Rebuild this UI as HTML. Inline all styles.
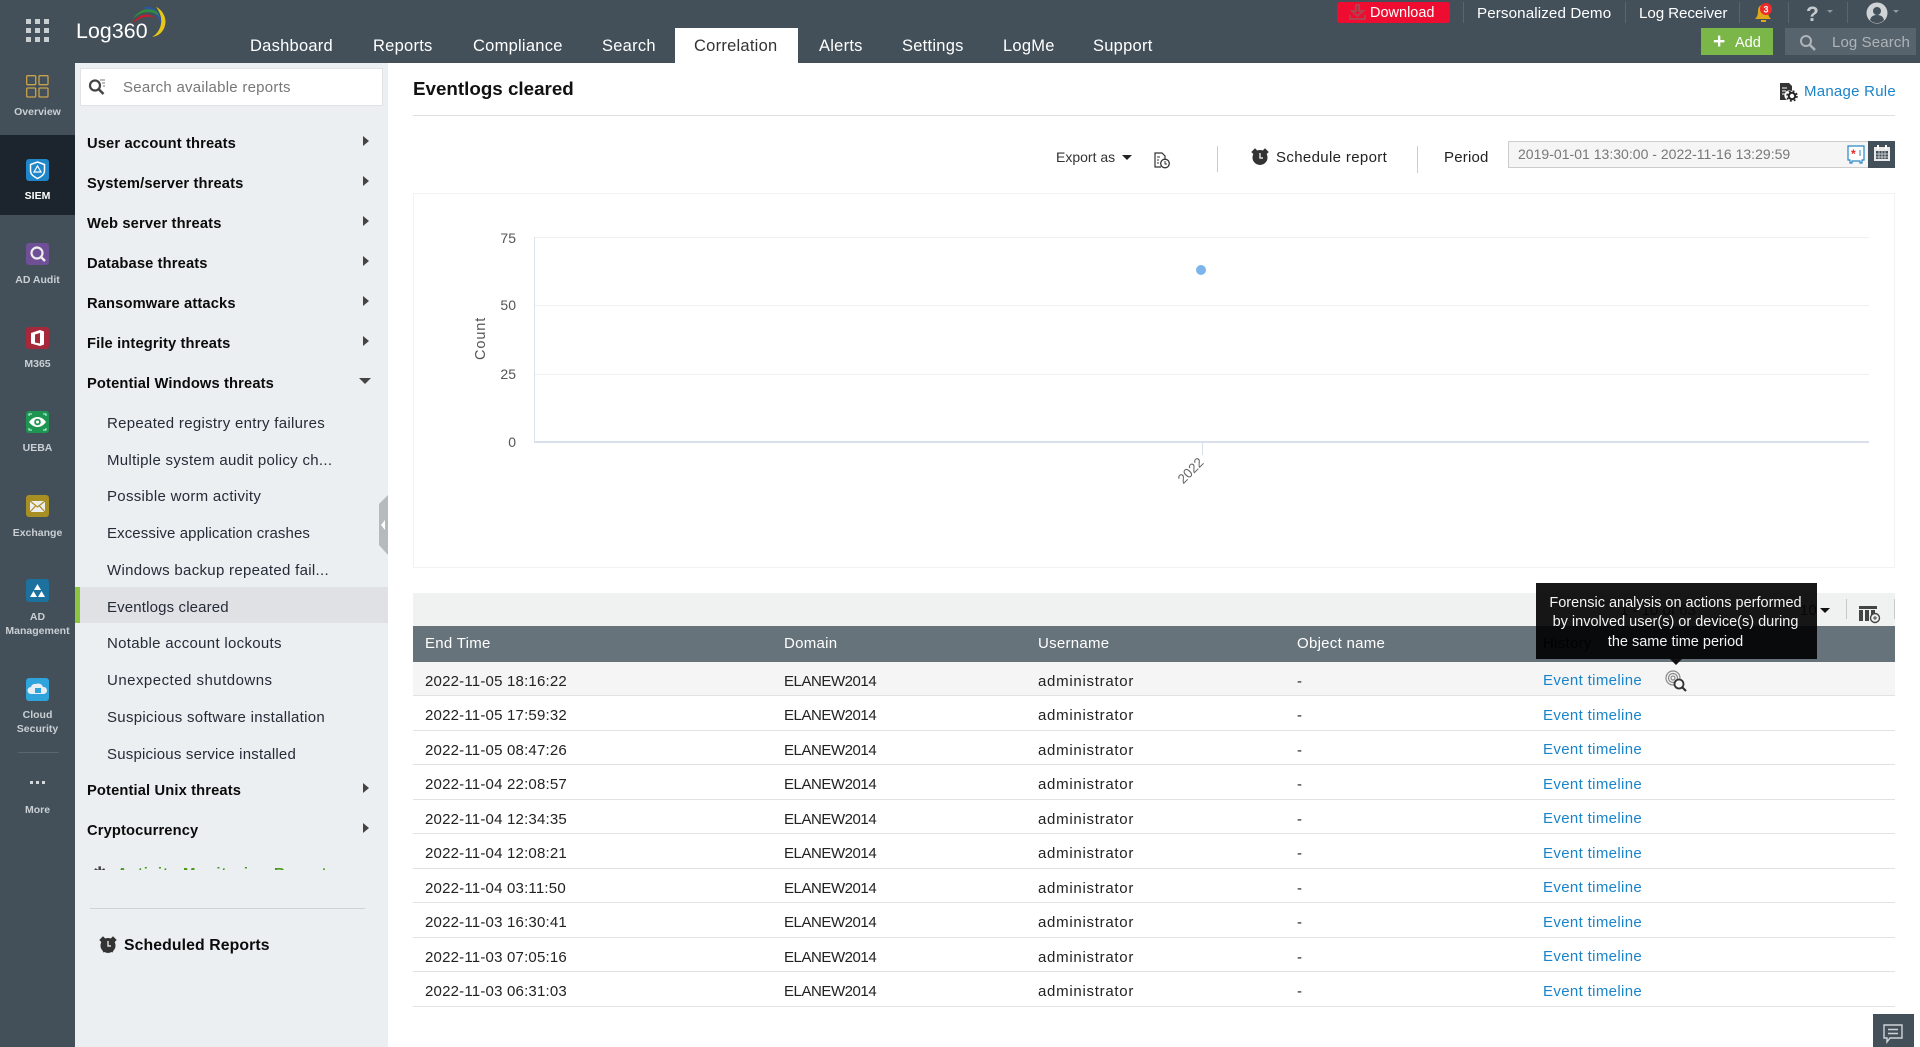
<!DOCTYPE html>
<html lang="en"><head><meta charset="utf-8"><title>Eventlogs cleared</title>
<style>
*{box-sizing:border-box}
html,body{margin:0;padding:0;width:1920px;height:1047px;overflow:hidden;background:#fff;font-family:"Liberation Sans",sans-serif;color:#222}
.b{position:absolute}
.t{position:absolute;white-space:nowrap;line-height:0;display:block;margin-top:1px}
svg{position:absolute;overflow:visible}
.nav{font-size:16.5px;color:#fff;top:45px;letter-spacing:.25px}
.top{font-size:15.2px;color:#fff;top:13px;letter-spacing:.1px}
.sl{font-size:10.5px;color:#c9cfd3;font-weight:bold;width:75px;left:0;text-align:center}
.h{font-size:14.7px;font-weight:bold;color:#0b0b0b;left:87px;letter-spacing:.14px}
.s{font-size:15px;color:#262b38;left:107px;letter-spacing:.3px}
.arr{position:absolute;left:363px;width:0;height:0;border-left:6px solid #444;border-top:5px solid transparent;border-bottom:5px solid transparent}
.th{font-size:15px;color:#fff;top:643px;letter-spacing:.28px}
.c{font-size:15px;color:#222;letter-spacing:.2px;margin-top:4px}
.d{letter-spacing:-.45px}
.u{letter-spacing:.72px}
.lnk{color:#1a84c9;font-size:15px;letter-spacing:.35px;margin-top:4px}
.ln{position:absolute;left:413px;width:1482px;height:1px;background:#e2e2e2}
.yl{font-size:14px;color:#555;text-align:right;width:40px;left:476px;margin-top:0}
.tip{font-size:14.5px;color:#f4f4f4;width:283px;left:1534px;text-align:center}
</style></head><body>

<!-- header -->
<div class="b" style="left:0;top:0;width:1920px;height:63px;background:#43505a"></div>
<svg style="left:0;top:0" width="200" height="63">
<g fill="#c9ced1">
<rect x="26" y="19" width="5" height="5"/><rect x="35" y="19" width="5" height="5"/><rect x="44" y="19" width="5" height="5"/>
<rect x="26" y="28" width="5" height="5"/><rect x="35" y="28" width="5" height="5"/><rect x="44" y="28" width="5" height="5"/>
<rect x="26" y="37" width="5" height="5"/><rect x="35" y="37" width="5" height="5"/><rect x="44" y="37" width="5" height="5"/>
</g>
<path d="M152 37C160 36 165 30 165.500 22 165.500 15 161 9 156 7 160 12 162 18 161 24 160 30 156 35 152 37Z" fill="#e8c516"/>
<path d="M143 8C149 5 156 8 160 15 161 18 161 21 161 24 159 16 152 10 143 8Z" fill="#2a55a4"/>
<path d="M133 19C138 10 147 7 156 11 158 13 158 14 159 16 151 10 141 11 133 19Z" fill="#2e8c3e"/>
<path d="M132 24C138 14 148 12 156 18 148 15 140 17 132 24Z" fill="#c41e2a"/>
</svg>
<span class="t" style="left:76px;top:30px;font-size:21.3px;color:#fff;letter-spacing:.1px">Log360</span>

<span class="t nav" style="left:250px">Dashboard</span>
<span class="t nav" style="left:373px">Reports</span>
<span class="t nav" style="left:473px">Compliance</span>
<span class="t nav" style="left:602px">Search</span>
<div class="b" style="left:675px;top:28px;width:123px;height:36px;background:#fff"></div>
<span class="t nav" style="left:694px;color:#333">Correlation</span>
<span class="t nav" style="left:819px">Alerts</span>
<span class="t nav" style="left:902px">Settings</span>
<span class="t nav" style="left:1003px">LogMe</span>
<span class="t nav" style="left:1093px">Support</span>

<div class="b" style="left:1337px;top:2px;width:113px;height:21px;background:#ee0d30;border-radius:3px"></div>
<svg style="left:1349px;top:5px" width="18" height="16"><path d="M7 0h3v6h4l-5.500 5L3 6h4zM1 10v4h15v-4" fill="none" stroke="#b3404f" stroke-width="2"/></svg>
<span class="t" style="left:1370px;top:12px;font-size:14.5px;color:#fff">Download</span>
<div class="b" style="left:1463px;top:2px;width:1px;height:21px;background:#5a666f"></div>
<span class="t top" style="left:1477px">Personalized Demo</span>
<div class="b" style="left:1625px;top:2px;width:1px;height:21px;background:#5a666f"></div>
<span class="t top" style="left:1639px;letter-spacing:-.1px">Log Receiver</span>
<div class="b" style="left:1739px;top:2px;width:1px;height:21px;background:#5a666f"></div>
<svg style="left:1753px;top:2px" width="22" height="20"><path d="M2 17c2-2 3-4 3-8s2-6 5-6 5 2 5 6 1 6 3 8zM8 18h5v2H8z" fill="#e0a915"/><circle cx="13" cy="7" r="6" fill="#ee2a2a"/><text x="13" y="10.500" font-size="9" font-weight="bold" fill="#fff" text-anchor="middle" font-family="Liberation Sans">3</text></svg>
<div class="b" style="left:1788px;top:2px;width:1px;height:21px;background:#5a666f"></div>
<span class="t" style="left:1806px;top:14px;font-size:21px;font-weight:bold;color:#c5cacd">?</span>
<div class="b" style="left:1827px;top:10px;border-top:3px solid #8d979d;border-left:3px solid transparent;border-right:3px solid transparent"></div>
<div class="b" style="left:1847px;top:2px;width:1px;height:21px;background:#5a666f"></div>
<svg style="left:1866px;top:2px" width="22" height="22"><circle cx="11" cy="11" r="10.500" fill="#cfd3d6"/><circle cx="11" cy="9" r="4" fill="#43505a"/><path d="M4 18c1-4 4-5 7-5s6 1 7 5c-2 2-4 3-7 3s-5-1-7-3z" fill="#43505a"/></svg>
<div class="b" style="left:1893px;top:10px;border-top:3px solid #8d979d;border-left:3px solid transparent;border-right:3px solid transparent"></div>

<div class="b" style="left:1701px;top:28px;width:72px;height:27px;background:#7ab648"></div>
<span class="t" style="left:1713px;top:41px;font-size:21px;font-weight:bold;color:#fff">+</span>
<span class="t" style="left:1735px;top:42px;font-size:14.5px;color:#fff">Add</span>
<div class="b" style="left:1785px;top:28px;width:131px;height:27px;background:#58646d"></div>
<svg style="left:1799px;top:34px" width="18" height="18"><circle cx="7" cy="7" r="5" fill="none" stroke="#aeb4b8" stroke-width="2"/><path d="M11 11l5 5" stroke="#aeb4b8" stroke-width="2.500"/></svg>
<span class="t" style="left:1832px;top:42px;font-size:15px;color:#aeb4b8;letter-spacing:.12px">Log Search</span>

<!-- left rail -->
<div class="b" style="left:0;top:63px;width:75px;height:984px;background:#43505a"></div>
<div class="b" style="left:0;top:135px;width:75px;height:80px;background:#1c252d"></div>
<svg style="left:26px;top:75px" width="23" height="23"><g fill="none" stroke="#c9a24a" stroke-width="1.300"><rect x=".7" y=".7" width="9" height="9" rx="1"/><rect x="13" y=".7" width="9" height="9" rx="1"/><rect x=".7" y="13" width="9" height="9" rx="1"/><rect x="13" y="13" width="9" height="9" rx="1"/></g></svg>
<span class="t sl" style="top:111px">Overview</span>
<svg style="left:26px;top:159px" width="23" height="22"><rect width="23" height="22" rx="3" fill="#1f86c9"/><path d="M11.500 3l7 2.500v6c0 4-3 6-7 8-4-2-7-4-7-8v-6z" fill="none" stroke="#fff" stroke-width="1.500"/><path d="M11.500 7l3.500 6H8z" fill="none" stroke="#fff" stroke-width="1.200"/></svg>
<span class="t sl" style="top:195px;color:#fff">SIEM</span>
<svg style="left:26px;top:243px" width="23" height="22"><rect width="23" height="22" rx="3" fill="#6f4f96"/><circle cx="11" cy="10" r="5.500" fill="#6f4f96" stroke="#eee" stroke-width="2.200"/><path d="M15 14l4 4" stroke="#eee" stroke-width="2.500"/></svg>
<span class="t sl" style="top:279px">AD Audit</span>
<svg style="left:26px;top:327px" width="23" height="22"><rect width="23" height="22" rx="3" fill="#a5293a"/><path d="M5 6l9-3 4 1.500v13L14 19l-9-2.500z" fill="#fff"/><path d="M9 7.500l5-1.500v10.500l-5-1z" fill="#a5293a"/></svg>
<span class="t sl" style="top:363px">M365</span>
<svg style="left:26px;top:411px" width="23" height="22"><rect width="23" height="22" rx="3" fill="#1d9651"/><path d="M3 11c3-4 6-5 8.500-5S17 7 20 11c-3 4-6 5-8.500 5S6 15 3 11z" fill="#fff"/><circle cx="11.500" cy="11" r="3.300" fill="#1d9651"/><circle cx="11.500" cy="11" r="1.500" fill="#fff"/><path d="M3 5V3h3M20 5V3h-3M3 17v2h3M20 17v2h-3" fill="none" stroke="#cfe" stroke-width="1"/></svg>
<span class="t sl" style="top:447px">UEBA</span>
<svg style="left:26px;top:495px" width="23" height="22"><rect width="23" height="22" rx="3" fill="#a78f24"/><rect x="4" y="6" width="15" height="11" fill="#eee"/><path d="M4 6l7.500 6L19 6M4 17l5.500-6M19 17l-5.500-6" fill="none" stroke="#a78f24" stroke-width="1.200"/></svg>
<span class="t sl" style="top:532px">Exchange</span>
<svg style="left:26px;top:579px" width="23" height="23"><rect width="23" height="23" rx="3" fill="#1c719f"/><path d="M11.500 5l3.500 6H8zM7.500 12l3.500 6H4zM15.500 12l3.500 6h-7z" fill="#fff"/></svg>
<span class="t sl" style="top:616px">AD</span><span class="t sl" style="top:630px">Management</span>
<svg style="left:26px;top:678px" width="23" height="23"><rect width="23" height="23" rx="3" fill="#2fa3dc"/><path d="M5 16a3.500 3.500 0 0 1 0-7 4 4 0 0 1 5-3 5 5 0 0 1 7 3 3.500 3.500 0 0 1 1 7z" fill="#e8eef2"/><rect x="9" y="10" width="6" height="5" fill="#2fa3dc"/></svg>
<span class="t sl" style="top:714px">Cloud</span><span class="t sl" style="top:728px">Security</span>
<div class="b" style="left:18px;top:752px;width:41px;height:1px;background:#5a666f"></div>
<div class="b" style="left:30px;top:781px;width:3px;height:3px;background:#d5d9db"></div>
<div class="b" style="left:36px;top:781px;width:3px;height:3px;background:#d5d9db"></div>
<div class="b" style="left:42px;top:781px;width:3px;height:3px;background:#d5d9db"></div>
<span class="t sl" style="top:809px">More</span>

<!-- report panel -->
<div class="b" style="left:75px;top:63px;width:313px;height:984px;background:#ebeff1"></div>
<div class="b" style="left:80px;top:68px;width:303px;height:38px;background:#fff;border:1px solid #dfe3e5"></div>
<svg style="left:88px;top:78px" width="18" height="18"><circle cx="7" cy="7.500" r="5" fill="none" stroke="#444" stroke-width="2.200"/><path d="M10.500 11l5 5" stroke="#444" stroke-width="2.500"/><path d="M12 2h5M14 5h3M15 8h2" stroke="#777" stroke-width="1"/></svg>
<span class="t" style="left:123px;top:87px;font-size:15px;color:#777;letter-spacing:.25px">Search available reports</span>

<span class="t h" style="top:143px">User account threats</span><div class="arr" style="top:136px"></div>
<span class="t h" style="top:183px">System/server threats</span><div class="arr" style="top:176px"></div>
<span class="t h" style="top:223px">Web server threats</span><div class="arr" style="top:216px"></div>
<span class="t h" style="top:263px">Database threats</span><div class="arr" style="top:256px"></div>
<span class="t h" style="top:303px">Ransomware attacks</span><div class="arr" style="top:296px"></div>
<span class="t h" style="top:343px">File integrity threats</span><div class="arr" style="top:336px"></div>
<span class="t h" style="top:383px">Potential Windows threats</span>
<div class="b" style="left:359px;top:378px;border-top:6px solid #444;border-left:6px solid transparent;border-right:6px solid transparent"></div>

<span class="t s" style="top:423px">Repeated registry entry failures</span>
<span class="t s" style="top:460px">Multiple system audit policy ch...</span>
<span class="t s" style="top:496px">Possible worm activity</span>
<span class="t s" style="top:533px;letter-spacing:.1px">Excessive application crashes</span>
<span class="t s" style="top:570px">Windows backup repeated fail...</span>
<div class="b" style="left:75px;top:587px;width:313px;height:36px;background:#dfe1e4"></div>
<div class="b" style="left:75px;top:587px;width:5px;height:36px;background:#8cc63f"></div>
<span class="t s" style="top:607px;letter-spacing:.15px">Eventlogs cleared</span>
<span class="t s" style="top:643px">Notable account lockouts</span>
<span class="t s" style="top:680px;letter-spacing:.48px">Unexpected shutdowns</span>
<span class="t s" style="top:717px">Suspicious software installation</span>
<span class="t s" style="top:754px;letter-spacing:.2px">Suspicious service installed</span>
<span class="t h" style="top:790px">Potential Unix threats</span><div class="arr" style="top:783px"></div>
<span class="t h" style="top:830px">Cryptocurrency</span><div class="arr" style="top:823px"></div>
<div class="b" style="left:90px;top:860px;width:280px;height:10px;overflow:hidden">
<span class="t" style="left:27px;top:13px;font-size:15px;font-weight:bold;color:#4a9a1e;letter-spacing:.85px">Activity Monitoring Reports</span>
<span class="t" style="left:3px;top:13px;font-size:16px;color:#444">&#10033;</span>
</div>
<div class="b" style="left:90px;top:908px;width:275px;height:1px;background:#cfd3d5"></div>
<svg style="left:99px;top:935px" width="18" height="19"><circle cx="9" cy="10.500" r="7.500" fill="#333"/><path d="M1 5l3-3 2 2-3 3zM17 5l-3-3-2 2 3 3zM4 17l2-1M14 17l-2-1" fill="#333" stroke="#333"/><path d="M9 6v5h3" fill="none" stroke="#fff" stroke-width="1.200"/></svg>
<span class="t" style="left:124px;top:945px;font-size:15.800px;font-weight:bold;color:#0b0b0b;letter-spacing:.1px">Scheduled Reports</span>
<svg style="left:379px;top:495px" width="9" height="60"><path d="M9 0L0 9v41l9 10z" fill="#b5bbbd"/><path d="M6 25v10l-4-5z" fill="#fff"/></svg>

<!-- main -->
<span class="t" style="left:413px;top:88px;font-size:18.800px;font-weight:bold;color:#111">Eventlogs cleared</span>
<svg style="left:1779px;top:83px" width="18" height="18"><path d="M1 0h9l3 3v5a5 5 0 0 0-5 9H1z" fill="#333"/><path d="M3 5h5M3 8h4M3 11h3" stroke="#fff"/><circle cx="13" cy="13" r="3.200" fill="none" stroke="#222" stroke-width="2"/><circle cx="13" cy="13" r="5" fill="none" stroke="#222" stroke-width="1.500" stroke-dasharray="2 2"/></svg>
<span class="t" style="left:1804px;top:91px;font-size:15px;color:#1a84c9;letter-spacing:.25px">Manage Rule</span>
<div class="b" style="left:413px;top:115px;width:1482px;height:1px;background:#e0e0e0"></div>

<span class="t" style="left:1056px;top:156px;font-size:14px;color:#333">Export as</span>
<div class="b" style="left:1122px;top:155px;border-top:5px solid #222;border-left:5px solid transparent;border-right:5px solid transparent"></div>
<svg style="left:1154px;top:152px" width="17" height="18"><path d="M7 15H1V1h7l3 3v3" fill="none" stroke="#333" stroke-width="1.200"/><circle cx="11" cy="11.500" r="4.300" fill="#fff" stroke="#333" stroke-width="1.300"/><path d="M11 9v3h2M3 5h3M3 8h2M3 11h2" fill="none" stroke="#333"/></svg>
<div class="b" style="left:1217px;top:146px;width:1px;height:26px;background:#ccc"></div>
<svg style="left:1251px;top:147px" width="18" height="19"><circle cx="9" cy="10.500" r="7.500" fill="#333"/><path d="M1 5l3-3 2 2-3 3zM17 5l-3-3-2 2 3 3z" fill="#333" stroke="#333"/><path d="M9 6v5h3" fill="none" stroke="#fff" stroke-width="1.200"/></svg>
<span class="t" style="left:1276px;top:157px;font-size:15px;color:#222;letter-spacing:.35px">Schedule report</span>
<div class="b" style="left:1417px;top:146px;width:1px;height:27px;background:#ccc"></div>
<span class="t" style="left:1444px;top:157px;font-size:15px;color:#222;letter-spacing:.2px">Period</span>
<div class="b" style="left:1508px;top:141px;width:362px;height:27px;background:#f5f5f5;border:1px solid #ccc"></div>
<span class="t" style="left:1518px;top:153px;font-size:14px;color:#777;letter-spacing:.02px">2019-01-01 13:30:00 - 2022-11-16 13:29:59</span>
<svg style="left:1847px;top:145px" width="18" height="19"><path d="M1 1h16v14h-2v3h-2v-2H5v2H3v-3H1z" fill="#fff" stroke="#2a86c5" stroke-width="1.200"/><text x="4" y="13" font-size="12" font-weight="bold" fill="#e22" font-family="Liberation Sans">*</text><path d="M13 5v6" stroke="#2a86c5"/></svg>
<div class="b" style="left:1868px;top:141px;width:27px;height:27px;background:#43505a"></div>
<svg style="left:1873px;top:144px" width="18" height="18"><path d="M1 3h16v14H1z" fill="#e9e9e9"/><path d="M5 1v4M13 1v4" stroke="#fff" stroke-width="2"/><rect x="3" y="7" width="12" height="8" fill="#43505a"/><path d="M3 10h12M3 13h12M6 7v8M9 7v8M12 7v8" stroke="#e9e9e9" stroke-width=".7"/></svg>

<!-- chart -->
<div class="b" style="left:413px;top:193px;width:1482px;height:375px;border:1px solid #f2f2f2"></div>
<div class="b" style="left:534px;top:237px;width:1335px;height:1px;background:#f0f0f0"></div>
<div class="b" style="left:534px;top:305px;width:1335px;height:1px;background:#f0f0f0"></div>
<div class="b" style="left:534px;top:374px;width:1335px;height:1px;background:#f0f0f0"></div>
<div class="b" style="left:534px;top:237px;width:1px;height:205px;background:#dbe3ee"></div>
<div class="b" style="left:534px;top:441px;width:1335px;height:2px;background:#d8e0ec"></div>
<div class="b" style="left:1202px;top:442px;width:1px;height:13px;background:#d8e0ec"></div>
<span class="t yl" style="top:238px">75</span>
<span class="t yl" style="top:305px">50</span>
<span class="t yl" style="top:374px">25</span>
<span class="t yl" style="top:442px">0</span>
<span class="t" style="left:461px;top:339px;width:40px;text-align:center;font-size:14.5px;color:#555;transform:rotate(-90deg);letter-spacing:.9px">Count</span>
<div class="b" style="left:1196px;top:265px;width:10px;height:10px;border-radius:50%;background:#7cb5ec"></div>
<span class="t" style="left:1171px;top:470px;width:40px;text-align:center;font-size:13.500px;color:#666;transform:rotate(-45deg)">2022</span>

<!-- table -->
<div class="b" style="left:413px;top:593px;width:1482px;height:33px;background:#f0f1f1"></div>
<div class="b" style="left:1846px;top:599px;width:1px;height:20px;background:#c8c8c8"></div>
<svg style="left:1859px;top:606px" width="22" height="18"><path d="M0 0h18v3H0zM0 4h4v11H0zM6 4h4v11H6zM12 4h4v5h-4z" fill="#444"/><circle cx="16" cy="12" r="4.500" fill="#f0f1f1" stroke="#444" stroke-width="1.400"/><path d="M14 12h4M16 10v4" stroke="#444"/></svg>
<div class="b" style="left:1894px;top:599px;width:1px;height:20px;background:#c8c8c8"></div>
<div class="b" style="left:413px;top:626px;width:1482px;height:36px;background:#67737a"></div>
<div class="b" style="left:413px;top:662px;width:1482px;height:33px;background:#f5f5f5"></div>
<span class="t th" style="left:425px">End Time</span>
<span class="t th" style="left:784px">Domain</span>
<span class="t th" style="left:1038px">Username</span>
<span class="t th" style="left:1297px">Object name</span>
<span class="t th" style="left:1543px;color:#111">History</span>

<div class="ln" style="top:695px"></div><div class="ln" style="top:730px"></div><div class="ln" style="top:764px"></div><div class="ln" style="top:799px"></div><div class="ln" style="top:833px"></div><div class="ln" style="top:868px"></div><div class="ln" style="top:902px"></div><div class="ln" style="top:937px"></div><div class="ln" style="top:971px"></div><div class="ln" style="top:1006px"></div>

<span class="t c" style="left:425px;top:678px">2022-11-05 18:16:22</span><span class="t c d" style="left:784px;top:678px">ELANEW2014</span><span class="t c u" style="left:1038px;top:678px">administrator</span><span class="t c" style="left:1297px;top:678px">-</span><span class="t lnk" style="left:1543px;top:677px">Event timeline</span>
<span class="t c" style="left:425px;top:712px">2022-11-05 17:59:32</span><span class="t c d" style="left:784px;top:712px">ELANEW2014</span><span class="t c u" style="left:1038px;top:712px">administrator</span><span class="t c" style="left:1297px;top:712px">-</span><span class="t lnk" style="left:1543px;top:712px">Event timeline</span>
<span class="t c" style="left:425px;top:747px">2022-11-05 08:47:26</span><span class="t c d" style="left:784px;top:747px">ELANEW2014</span><span class="t c u" style="left:1038px;top:747px">administrator</span><span class="t c" style="left:1297px;top:747px">-</span><span class="t lnk" style="left:1543px;top:746px">Event timeline</span>
<span class="t c" style="left:425px;top:781px">2022-11-04 22:08:57</span><span class="t c d" style="left:784px;top:781px">ELANEW2014</span><span class="t c u" style="left:1038px;top:781px">administrator</span><span class="t c" style="left:1297px;top:781px">-</span><span class="t lnk" style="left:1543px;top:781px">Event timeline</span>
<span class="t c" style="left:425px;top:816px">2022-11-04 12:34:35</span><span class="t c d" style="left:784px;top:816px">ELANEW2014</span><span class="t c u" style="left:1038px;top:816px">administrator</span><span class="t c" style="left:1297px;top:816px">-</span><span class="t lnk" style="left:1543px;top:815px">Event timeline</span>
<span class="t c" style="left:425px;top:850px">2022-11-04 12:08:21</span><span class="t c d" style="left:784px;top:850px">ELANEW2014</span><span class="t c u" style="left:1038px;top:850px">administrator</span><span class="t c" style="left:1297px;top:850px">-</span><span class="t lnk" style="left:1543px;top:850px">Event timeline</span>
<span class="t c" style="left:425px;top:885px">2022-11-04 03:11:50</span><span class="t c d" style="left:784px;top:885px">ELANEW2014</span><span class="t c u" style="left:1038px;top:885px">administrator</span><span class="t c" style="left:1297px;top:885px">-</span><span class="t lnk" style="left:1543px;top:884px">Event timeline</span>
<span class="t c" style="left:425px;top:919px">2022-11-03 16:30:41</span><span class="t c d" style="left:784px;top:919px">ELANEW2014</span><span class="t c u" style="left:1038px;top:919px">administrator</span><span class="t c" style="left:1297px;top:919px">-</span><span class="t lnk" style="left:1543px;top:919px">Event timeline</span>
<span class="t c" style="left:425px;top:954px">2022-11-03 07:05:16</span><span class="t c d" style="left:784px;top:954px">ELANEW2014</span><span class="t c u" style="left:1038px;top:954px">administrator</span><span class="t c" style="left:1297px;top:954px">-</span><span class="t lnk" style="left:1543px;top:953px">Event timeline</span>
<span class="t c" style="left:425px;top:988px">2022-11-03 06:31:03</span><span class="t c d" style="left:784px;top:988px">ELANEW2014</span><span class="t c u" style="left:1038px;top:988px">administrator</span><span class="t c" style="left:1297px;top:988px">-</span><span class="t lnk" style="left:1543px;top:988px">Event timeline</span>

<svg style="left:1665px;top:670px" width="23" height="23"><g fill="none" stroke="#888" stroke-width="1.200"><circle cx="8" cy="8" r="7"/><circle cx="8" cy="8" r="4.500"/><circle cx="8" cy="8" r="2"/></g><circle cx="14" cy="14" r="4.500" fill="#f5f5f5" stroke="#333" stroke-width="1.800"/><path d="M17 17l4 4" stroke="#333" stroke-width="2.200"/></svg>

<!-- tooltip -->
<span class="t" style="left:1620px;top:610px;font-size:15px;color:#555">1 - 10 of 63</span>
<span class="t" style="left:1800px;top:610px;font-size:15px;color:#555">10</span>
<div class="b" style="left:1820px;top:608px;border-top:5px solid #111;border-left:5px solid transparent;border-right:5px solid transparent"></div>
<div class="b" style="left:1536px;top:583px;width:281px;height:76px;background:rgba(0,0,0,.91)"></div>
<div class="b" style="left:1670px;top:659px;border-top:6px solid #111;border-left:6px solid transparent;border-right:6px solid transparent"></div>
<span class="t tip" style="top:602px">Forensic analysis on actions performed</span>
<span class="t tip" style="top:621px">by involved user(s) or device(s) during</span>
<span class="t tip" style="top:641px">the same time period</span>

<!-- chat -->
<div class="b" style="left:1873px;top:1014px;width:41px;height:33px;background:#43505a"></div>
<svg style="left:1883px;top:1024px" width="21" height="20"><path d="M1 1h18v13H7l-3 4v-4H1z" fill="none" stroke="#cfd3d6" stroke-width="1.400"/><path d="M5 5.500h10M5 9.500h10" stroke="#cfd3d6" stroke-width="1.500"/></svg>
</body></html>
